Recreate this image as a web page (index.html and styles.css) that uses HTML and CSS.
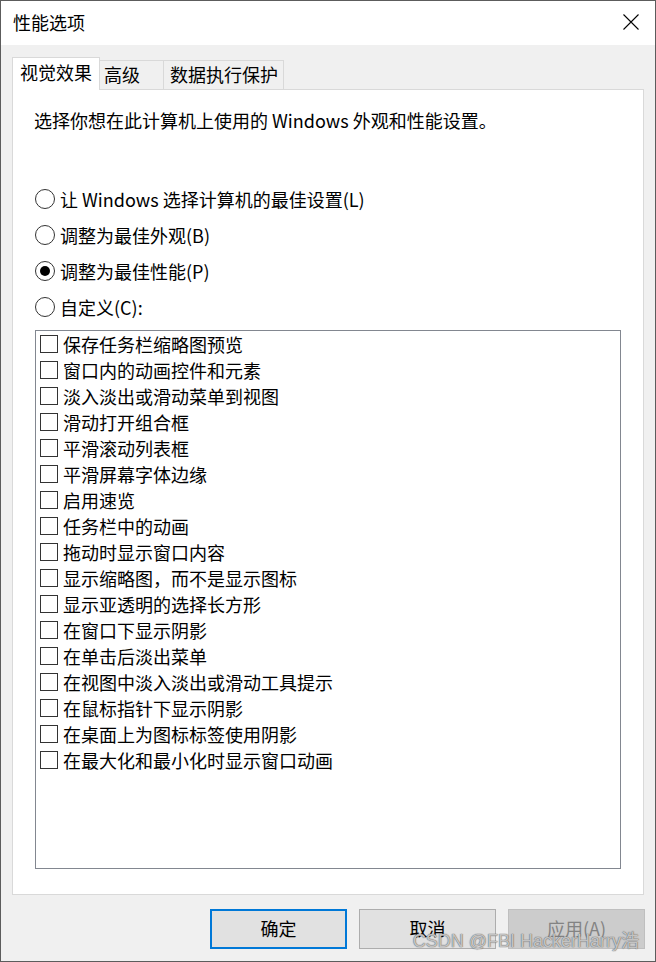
FILE: index.html
```html
<!DOCTYPE html>
<html lang="zh-CN">
<head>
<meta charset="utf-8">
<title>性能选项</title>
<link rel="stylesheet" href="styles.css">
</head>
<body>
<div class="window">
  <div class="titlebar">
    <span class="title">性能选项</span>
    <svg class="close" width="16" height="16" viewBox="0 0 16 16"><path d="M0.5 0.5 L15.5 15.5 M15.5 0.5 L0.5 15.5" stroke="#000" stroke-width="1.1" fill="none"/></svg>
  </div>
  <div class="body">
    <div class="tabs">
      <div class="tab active w1">视觉效果</div>
      <div class="tab w2">高级</div>
      <div class="tab w3">数据执行保护</div>
    </div>
    <div class="panel">
      <p class="desc">选择你想在此计算机上使用的 Windows 外观和性能设置。</p>
      <div class="radios">
        <div class="radio"><span class="circle"></span><span>让 Windows 选择计算机的最佳设置(L)</span></div>
        <div class="radio"><span class="circle"></span><span>调整为最佳外观(B)</span></div>
        <div class="radio"><span class="circle on"></span><span>调整为最佳性能(P)</span></div>
        <div class="radio"><span class="circle"></span><span>自定义(C):</span></div>
      </div>
      <div class="listbox">
        <div class="item"><span class="box"></span><span>保存任务栏缩略图预览</span></div>
        <div class="item"><span class="box"></span><span>窗口内的动画控件和元素</span></div>
        <div class="item"><span class="box"></span><span>淡入淡出或滑动菜单到视图</span></div>
        <div class="item"><span class="box"></span><span>滑动打开组合框</span></div>
        <div class="item"><span class="box"></span><span>平滑滚动列表框</span></div>
        <div class="item"><span class="box"></span><span>平滑屏幕字体边缘</span></div>
        <div class="item"><span class="box"></span><span>启用速览</span></div>
        <div class="item"><span class="box"></span><span>任务栏中的动画</span></div>
        <div class="item"><span class="box"></span><span>拖动时显示窗口内容</span></div>
        <div class="item"><span class="box"></span><span>显示缩略图，而不是显示图标</span></div>
        <div class="item"><span class="box"></span><span>显示亚透明的选择长方形</span></div>
        <div class="item"><span class="box"></span><span>在窗口下显示阴影</span></div>
        <div class="item"><span class="box"></span><span>在单击后淡出菜单</span></div>
        <div class="item"><span class="box"></span><span>在视图中淡入淡出或滑动工具提示</span></div>
        <div class="item"><span class="box"></span><span>在鼠标指针下显示阴影</span></div>
        <div class="item"><span class="box"></span><span>在桌面上为图标标签使用阴影</span></div>
        <div class="item"><span class="box"></span><span>在最大化和最小化时显示窗口动画</span></div>
      </div>
    </div>
    <div class="buttons">
      <div class="btn primary">确定</div>
      <div class="btn">取消</div>
      <div class="btn disabled">应用(A)</div>
    </div>
  </div>
  <div class="watermark">CSDN @FBI HackerHarry浩</div>
</div>
</body>
</html>
```

FILE: styles.css
```css
html, body {
  margin: 0;
  padding: 0;
  background: #2a2a2a;
}
body {
  font-family: "Noto Sans CJK SC", "Microsoft YaHei", sans-serif;
  font-size: 18px;
  color: #000;
}
.window {
  position: relative;
  width: 654px;
  height: 960px;
  border: 1px solid #5c5c5c;
  background: #f0f0f0;
  display: flex;
  flex-direction: column;
  overflow: hidden;
}
.titlebar {
  height: 44px;
  background: #fff;
  display: flex;
  align-items: center;
  justify-content: space-between;
  padding: 0 16px 0 12px;
  flex: none;
}
.title {
  line-height: 24px;
  margin-top: -2px;
}
.close {
  display: block;
  margin-top: -2px;
}
.body {
  flex: 1;
  display: flex;
  flex-direction: column;
  padding-top: 12px;
}
.tabs {
  display: flex;
  align-items: flex-end;
  margin-left: 11px;
  height: 32px;
}
.tab {
  box-sizing: border-box;
  height: 29px;
  border: 1px solid #d9d9d9;
  border-bottom: none;
  background: #f0f0f0;
  line-height: 26px;
  padding-left: 5px;
  margin-left: -1px;
}
.tab.active {
  height: 33px;
  background: #fff;
  position: relative;
  z-index: 1;
  margin-bottom: -1px;
  margin-left: 0;
  line-height: 29px;
  padding-left: 7px;
}
.w1 { width: 88px; }
.w2 { width: 65px; padding-left: 4px; }
.w3 { width: 121px; padding-left: 6px; }
.panel {
  box-sizing: border-box;
  margin: 0 11px;
  height: 806px;
  background: #fff;
  border: 1px solid #d9d9d9;
  padding: 18px 21px 0 21px;
  flex: none;
}
.desc {
  margin: 0;
  line-height: 24px;
}
.radios {
  margin-top: 49px;
}
.radio {
  height: 36px;
  display: flex;
  align-items: center;
  line-height: 24px;
}
.radio span:last-child {
  margin-top: -1px;
}
.circle {
  box-sizing: border-box;
  width: 20px;
  height: 20px;
  border: 1px solid #333;
  border-radius: 50%;
  margin-left: 1px;
  margin-right: 5px;
  display: flex;
  align-items: center;
  justify-content: center;
  flex: none;
}
.circle.on::after {
  content: "";
  width: 10px;
  height: 10px;
  border-radius: 50%;
  background: #000;
}
.listbox {
  box-sizing: border-box;
  margin: 5px 1px 0 1px;
  height: 539px;
  width: 586px;
  border: 1px solid #828790;
}
.item {
  height: 26px;
  display: flex;
  align-items: center;
  line-height: 24px;
}
.item span:last-child {
  margin-top: -1px;
}
.box {
  box-sizing: border-box;
  width: 18px;
  height: 18px;
  border: 1px solid #333;
  margin-left: 4px;
  margin-right: 5px;
  flex: none;
}
.buttons {
  display: flex;
  justify-content: flex-end;
  gap: 12px;
  margin-top: 14px;
  margin-right: 10px;
}
.btn {
  box-sizing: border-box;
  width: 137px;
  height: 40px;
  background: #e1e1e1;
  border: 1px solid #adadad;
  display: flex;
  align-items: center;
  justify-content: center;
  line-height: 24px;
  padding-bottom: 3px;
}
.btn.primary {
  border: 2px solid #0078d7;
}
.btn.disabled {
  background: #cccccc;
  border-color: #bfbfbf;
  color: #838383;
}
.watermark {
  position: absolute;
  right: 16px;
  bottom: 8px;
  font-family: "Liberation Sans", Arial, sans-serif;
  font-size: 18px;
  line-height: 24px;
  color: rgba(240, 240, 240, 0.7);
  text-shadow: 0 0 1px rgba(90, 90, 90, 0.9), 0 0 1px rgba(90, 90, 90, 0.9);
  white-space: nowrap;
}
```
